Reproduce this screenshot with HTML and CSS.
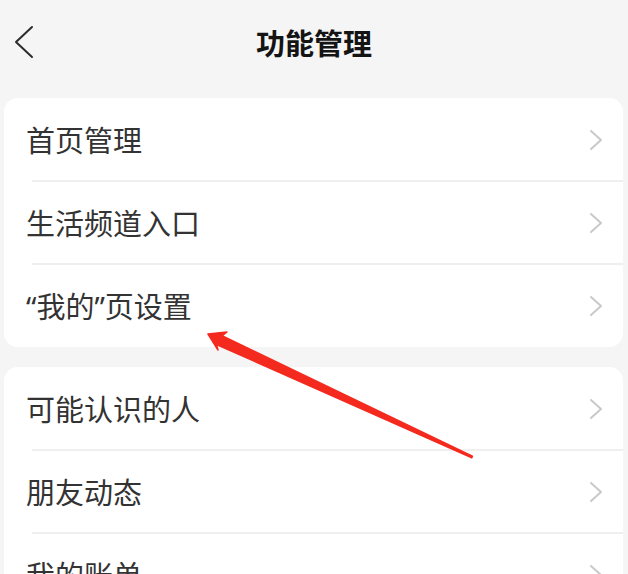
FILE: index.html
```html
<!DOCTYPE html>
<html lang="zh-CN">
<head>
<meta charset="utf-8">
<title>功能管理</title>
<link rel="stylesheet" href="styles.css">
</head>
<body>
<div class="page">
  <header class="topbar">
    <span class="back">
      <svg width="22" height="34" viewBox="0 0 22 34"><polyline points="18,2 2,17 18,32" fill="none" stroke="#2b2b2b" stroke-width="2" stroke-linecap="round" stroke-linejoin="round"/></svg>
    </span>
    <h1 class="title">功能管理</h1>
  </header>

  <section class="card">
    <div class="row"><span class="label">首页管理</span><svg class="chev" width="16" height="22" viewBox="0 0 16 22"><polyline points="3,2 13,11 3,20" fill="none" stroke="#c9c9c9" stroke-width="2" stroke-linecap="round" stroke-linejoin="round"/></svg></div>
    <div class="row"><span class="label">生活频道入口</span><svg class="chev" width="16" height="22" viewBox="0 0 16 22"><polyline points="3,2 13,11 3,20" fill="none" stroke="#c9c9c9" stroke-width="2" stroke-linecap="round" stroke-linejoin="round"/></svg></div>
    <div class="row"><span class="label"><span class="q">“</span>我的<span class="q">”</span>页设置</span><svg class="chev" width="16" height="22" viewBox="0 0 16 22"><polyline points="3,2 13,11 3,20" fill="none" stroke="#c9c9c9" stroke-width="2" stroke-linecap="round" stroke-linejoin="round"/></svg></div>
  </section>

  <section class="card">
    <div class="row"><span class="label">可能认识的人</span><svg class="chev" width="16" height="22" viewBox="0 0 16 22"><polyline points="3,2 13,11 3,20" fill="none" stroke="#c9c9c9" stroke-width="2" stroke-linecap="round" stroke-linejoin="round"/></svg></div>
    <div class="row"><span class="label">朋友动态</span><svg class="chev" width="16" height="22" viewBox="0 0 16 22"><polyline points="3,2 13,11 3,20" fill="none" stroke="#c9c9c9" stroke-width="2" stroke-linecap="round" stroke-linejoin="round"/></svg></div>
    <div class="row"><span class="label">我的账单</span><svg class="chev" width="16" height="22" viewBox="0 0 16 22"><polyline points="3,2 13,11 3,20" fill="none" stroke="#c9c9c9" stroke-width="2" stroke-linecap="round" stroke-linejoin="round"/></svg></div>
  </section>

  <svg class="annot" width="628" height="574" viewBox="0 0 628 574">
    <polygon points="208,334 227,332 222,335.8 472.4,456.2 471.8,457.8 216.5,344.5 218,350" fill="#f42a1f" stroke="#f42a1f" stroke-width="1.5" stroke-linejoin="round"/>
  </svg>
</div>
</body>
</html>
```
FILE: styles.css
```css
html, body {
  margin: 0;
  padding: 0;
  background: #f5f5f5;
  overflow: hidden;
}
body {
  width: 628px;
  height: 574px;
  font-family: "Noto Sans CJK SC", "Noto Sans", sans-serif;
}
.page {
  position: relative;
  width: 628px;
  height: 574px;
  overflow: hidden;
}
.topbar {
  height: 84px;
  display: flex;
  align-items: center;
  justify-content: center;
  position: relative;
}
.back {
  position: absolute;
  left: 14px;
  top: 25px;
  display: flex;
}
.title {
  margin: 0;
  font-size: 29px;
  font-weight: 700;
  color: #141414;
  line-height: 1;
}
.card {
  background: #ffffff;
  margin: 14px 5px 0 4px;
  border-radius: 14px;
  overflow: hidden;
}
.card + .card {
  margin-top: 20px;
}
.row {
  height: 83px;
  display: flex;
  align-items: center;
  justify-content: space-between;
  padding: 0 19px 0 22px;
  position: relative;
}
.row + .row::before {
  content: "";
  position: absolute;
  left: 28px;
  right: 0;
  top: -1px;
  height: 2px;
  background: #efefef;
}
.label {
  font-size: 29px;
  color: #333333;
  line-height: 1;
}
.q {
  font-family: "Noto Sans", "Liberation Sans", sans-serif;
}
.chev {
  display: block;
}
.annot {
  position: absolute;
  left: 0;
  top: 0;
  pointer-events: none;
}
```
